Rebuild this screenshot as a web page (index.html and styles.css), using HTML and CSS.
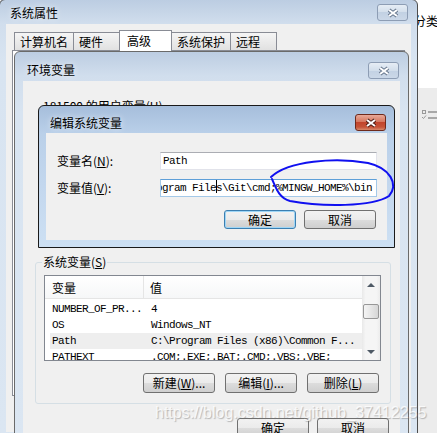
FILE: index.html
```html
<!DOCTYPE html>
<html>
<head>
    <meta charset="utf-8">
    <title>编辑系统变量</title>
    <link rel="stylesheet" href="styles.css">
</head>
<body>
    <div class="desktop">
        <div class="back-win">
            <div class="back-top">分类</div>
            <div class="back-bottom">
                <svg width="16" height="11" viewBox="0 0 16 11">
                    <rect x="0.5" y="0.5" width="3" height="3" fill="none" stroke="#9a9a9a"/>
                    <rect x="6" y="1" width="10" height="2" fill="#a8a8a8"/>
                    <path d="M0 7 L1.5 8.5 L4 5.5" stroke="#9a9a9a" fill="none"/>
                    <rect x="6" y="7" width="10" height="2" fill="#a8a8a8"/>
                </svg>
            </div>
        </div>

        <div class="win win-sys">
            <div class="title-bar">
                <span class="title">系统属性</span>
                <span class="close">
                    <svg width="14" height="10" viewBox="0 0 14 10"><path d="M3 2 L11 8 M11 2 L3 8" stroke="#66768c" stroke-width="4"/><path d="M3 2 L11 8 M11 2 L3 8" stroke="#fff" stroke-width="2"/></svg>
                </span>
            </div>
            <div class="client sys-client">
                <div class="tabs">
                    <div class="tab">计算机名</div>
                    <div class="tab">硬件</div>
                    <div class="tab active">高级</div>
                    <div class="tab">系统保护</div>
                    <div class="tab">远程</div>
                </div>
                <div class="tab-panel"></div>
            </div>
        </div>

        <div class="win win-env">
            <div class="title-bar">
                <span class="title">环境变量</span>
                <span class="close">
                    <svg width="14" height="10" viewBox="0 0 14 10"><path d="M3 2 L11 8 M11 2 L3 8" stroke="#66768c" stroke-width="4"/><path d="M3 2 L11 8 M11 2 L3 8" stroke="#fff" stroke-width="2"/></svg>
                </span>
            </div>
            <div class="client env-client">
                <div class="group-caption">181500 的用户变量(<u>U</u>)</div>
                <div class="user-area"></div>
                <fieldset class="group">
                    <legend>系统变量(<u>S</u>)</legend>
                    <div class="listbox">
                        <div class="list-grid">
                            <div class="list-head">
                                <div class="col-name">变量</div>
                                <div class="col-value">值</div>
                            </div>
                            <div class="list-body mono">
                                <div class="list-row"><div class="col-name">NUMBER_OF_PR...</div><div class="col-value">4</div></div>
                                <div class="list-row"><div class="col-name">OS</div><div class="col-value">Windows_NT</div></div>
                                <div class="list-row hot"><div class="col-name">Path</div><div class="col-value">C:\Program Files (x86)\Common F...</div></div>
                                <div class="list-row"><div class="col-name">PATHEXT</div><div class="col-value">.COM;.EXE;.BAT;.CMD;.VBS;.VBE;</div></div>
                            </div>
                        </div>
                        <div class="vscroll">
                            <div class="sb-btn"><span class="arrow-up"></span></div>
                            <div class="sb-track"><div class="sb-thumb"></div></div>
                            <div class="sb-btn"><span class="arrow-down"></span></div>
                        </div>
                    </div>
                    <div class="btn-row group-btns">
                        <button class="btn">新建(<u>W</u>)...</button>
                        <button class="btn">编辑(<u>I</u>)...</button>
                        <button class="btn">删除(<u>L</u>)</button>
                    </div>
                </fieldset>
                <div class="btn-row dialog-btns">
                    <button class="btn">确定</button>
                    <button class="btn">取消</button>
                </div>
            </div>
        </div>

        <div class="win win-edit">
            <div class="title-bar">
                <span class="title">编辑系统变量</span>
                <span class="close close-red">
                    <svg width="14" height="10" viewBox="0 0 14 10"><path d="M3 2 L11 8 M11 2 L3 8" stroke="#4a1a10" stroke-width="4"/><path d="M3 2 L11 8 M11 2 L3 8" stroke="#fff" stroke-width="2"/></svg>
                </span>
            </div>
            <div class="client edit-client">
                <div class="field-row">
                    <label>变量名(<u>N</u>):</label>
                    <div class="edit-box mono">Path</div>
                </div>
                <div class="field-row">
                    <label>变量值(<u>V</u>):</label>
                    <div class="edit-box focus mono"><span class="scrolled">ogram File<span class="caret"></span>s\Git\cmd;%MINGW_HOME%\bin</span></div>
                </div>
                <div class="btn-row edit-btns">
                    <button class="btn default">确定</button>
                    <button class="btn">取消</button>
                </div>
            </div>
        </div>

        <svg class="ink-mark" width="437" height="433" viewBox="0 0 437 433">
            <path d="M271 177 C 288 161, 335 157, 368 163 C 390 168, 399 184, 389 196 C 372 207, 322 207, 290 201 C 279 198, 276 188, 272 179" fill="none" stroke="#1010f0" stroke-width="2" stroke-linecap="round"/>
        </svg>

        <div class="watermark">https://blog.csdn.net/github_37412255</div>
    </div>
</body>
</html>
```

FILE: styles.css
```css
body {
    margin: 0;
    font-family: "Noto Sans CJK SC", sans-serif;
    font-size: 12px;
    color: #000;
    background-color: #f0f0f0;
}

.desktop {
    position: relative;
    width: 437px;
    height: 433px;
    overflow: hidden;
}

.mono {
    font-family: "Liberation Mono", monospace;
    font-size: 11px;
    letter-spacing: -0.6px;
}

/* window behind, on the right */
.back-win {
    position: absolute;
    left: 408px;
    top: 0;
    width: 29px;
    height: 433px;
    display: flex;
    flex-direction: column;
    overflow: hidden;
}

.back-top {
    height: 88px;
    background-color: #fff;
    padding: 13px 0 0 6px;
    line-height: 16px;
    white-space: nowrap;
    box-sizing: border-box;
}

.back-bottom {
    flex: 1;
    background-color: #ececec;
    padding: 19px 0 0 14px;
}

/* windows */
.win {
    position: absolute;
    box-sizing: border-box;
    border: 1px solid #666;
    border-radius: 6px 6px 0 0;
    display: flex;
    flex-direction: column;
    background: linear-gradient(#bccde2, #d1deed 24px, #d8e4f1 60px, #dbe6f2);
}

.title-bar {
    flex: none;
    display: flex;
    justify-content: space-between;
    align-items: flex-start;
}

.title {
    line-height: 16px;
    text-shadow: 0 0 6px rgba(255, 255, 255, 0.9);
}

.close {
    width: 31px;
    height: 17px;
    box-sizing: border-box;
    border: 1px solid #8d9db4;
    border-radius: 3px;
    background: linear-gradient(#e6edf5, #d2deeb 50%, #c2d1e3 50%, #cbd8e8);
    display: flex;
    align-items: center;
    justify-content: center;
}

.close-red {
    border-color: #6e2a1c;
    background: linear-gradient(#e8a998, #d6775f 45%, #c2452c 50%, #c65337 80%, #d88a6b);
}

.client {
    flex: 1;
    background-color: #f0f0f0;
}

/* 系统属性 */
.win-sys {
    left: -1px;
    top: -1px;
    width: 419px;
    height: 440px;
    padding: 0 6px 6px;
    border-color: #4d4d4d;
}

.win-sys .title-bar {
    height: 24px;
}

.win-sys .title {
    padding: 5px 0 0 4px;
}

.win-sys .close {
    margin: 4px 3px 0 0;
}

.tabs {
    display: flex;
    align-items: flex-end;
    padding: 6px 0 0 8px;
}

.tab {
    height: 18px;
    min-width: 47px;
    box-sizing: border-box;
    padding: 0 5px;
    border: 1px solid #898c95;
    border-bottom: none;
    background: linear-gradient(#f5f5f5, #e1e1e1);
    line-height: 18px;
}

.tab + .tab {
    margin-left: -1px;
}

.tab.active {
    position: relative;
    z-index: 1;
    height: 21px;
    min-width: 53px;
    padding: 0 7px;
    margin-bottom: -1px;
    background: #fff;
    line-height: 19px;
}

.tab-panel {
    height: 344px;
    margin: 0 6px;
    border: 1px solid #898c95;
    background-color: #fff;
}

/* 环境变量 */
.win-env {
    left: 14px;
    top: 51px;
    width: 395px;
    height: 400px;
    padding: 0 8px 8px;
    border-color: #6a6a6a;
}

.win-env .title-bar {
    height: 29px;
}

.win-env .title {
    padding: 10px 0 0 4px;
}

.win-env .close {
    margin: 10px 1px 0 0;
}

.env-client {
    padding-top: 17px;
}

.group-caption {
    padding-left: 20px;
    line-height: 16px;
}

.user-area {
    height: 140px;
}

.group {
    margin: 0 9px 0 12px;
    padding: 5px 9px 10px 8px;
    border: 1px solid #d5dfe5;
    border-radius: 3px;
}

.group legend {
    padding: 0 1px;
    margin-left: -2px;
    line-height: 16px;
}

.listbox {
    height: 86px;
    box-sizing: border-box;
    border: 1px solid #828790;
    background-color: #fff;
    display: flex;
    overflow: hidden;
}

.list-grid {
    flex: 1;
    overflow: hidden;
}

.list-head {
    display: flex;
    height: 23px;
    box-sizing: border-box;
    border-bottom: 1px solid #e5e5e5;
    background: linear-gradient(#fff, #f6f7f8);
}

.list-head .col-name {
    width: 99px;
    box-sizing: border-box;
    padding: 3px 0 0 7px;
    border-right: 1px solid #e5e5e5;
    line-height: 18px;
}

.list-head .col-value {
    padding: 3px 0 0 6px;
    line-height: 18px;
}

.list-body {
    padding-top: 2px;
}

.list-row {
    display: flex;
    height: 16px;
    margin-left: 5px;
    line-height: 16px;
    white-space: nowrap;
}

.list-row.hot {
    background-color: #eeeeee;
}

.list-row .col-name {
    width: 94px;
    box-sizing: border-box;
    padding-left: 2px;
}

.list-row .col-value {
    padding-left: 7px;
}

.vscroll {
    width: 18px;
    display: flex;
    flex-direction: column;
    background: linear-gradient(90deg, #e9e9e9, #f5f5f5 20%, #f5f5f5 80%, #ececec);
}

.sb-btn {
    height: 17px;
    display: flex;
    align-items: center;
    justify-content: center;
}

.arrow-up {
    border-left: 4px solid transparent;
    border-right: 4px solid transparent;
    border-bottom: 4px solid #4f5a66;
}

.arrow-down {
    border-left: 4px solid transparent;
    border-right: 4px solid transparent;
    border-top: 4px solid #4f5a66;
}

.sb-track {
    flex: 1;
    padding: 11px 1px 0;
}

.sb-thumb {
    height: 15px;
    border: 1px solid #979797;
    border-radius: 2px;
    box-sizing: border-box;
    background: linear-gradient(90deg, #f4f4f4, #e6e6e6 50%, #d6d6d6);
}

/* buttons */
.btn-row {
    display: flex;
    justify-content: flex-end;
}

.btn {
    width: 72px;
    height: 20px;
    padding: 0;
    box-sizing: border-box;
    border: 1px solid #707070;
    border-radius: 3px;
    background: linear-gradient(#f2f2f2, #ebebeb 50%, #dddddd 50%, #cfcfcf);
    font-family: "Noto Sans CJK SC", sans-serif;
    font-size: 12px;
    color: #000;
    line-height: 16px;
}

.btn.default {
    border-color: #3c7fb1;
    box-shadow: inset 0 0 0 1px #9fd6f6;
}

.group-btns {
    margin-top: 12px;
    gap: 10px;
    padding-right: 2px;
}

.dialog-btns {
    margin-top: 14px;
    gap: 8px;
    padding-right: 11px;
}

/* 编辑系统变量 */
.win-edit {
    left: 38px;
    top: 105px;
    width: 357px;
    height: 143px;
    padding: 0 7px 7px;
    border-color: #1a1a1a;
    background: linear-gradient(#a6bedb, #bad0e9 28px, #c3d7ee 80px, #cde0f3);
}

.win-edit .title-bar {
    height: 27px;
}

.win-edit .title {
    padding: 9px 0 0 4px;
}

.win-edit .close {
    margin: 8px 1px 0 0;
}

.edit-client {
    padding: 19px 10px 0 11px;
}

.field-row {
    display: flex;
    align-items: center;
    height: 18px;
}

.field-row + .field-row {
    margin-top: 9px;
}

.field-row label {
    width: 103px;
    line-height: 16px;
}

.edit-box {
    flex: 1;
    height: 18px;
    box-sizing: border-box;
    border: 1px solid #e2e3ea;
    border-top-color: #abadb3;
    background-color: #fff;
    padding-left: 2px;
    line-height: 16px;
    white-space: nowrap;
    overflow: hidden;
}

.edit-box.focus {
    border-color: #a4c9e8;
    border-top-color: #5e9fd8;
    padding-left: 0;
}

.scrolled {
    margin-left: -5px;
}

.caret {
    display: inline-block;
    width: 1px;
    height: 13px;
    margin-right: -1px;
    background-color: #000;
    vertical-align: -2px;
}

.edit-btns {
    margin-top: 13px;
    gap: 8px;
    padding-right: 1px;
}

.edit-btns .btn {
    height: 19px;
}

/* overlays */
.ink-mark {
    position: absolute;
    left: 0;
    top: 0;
    pointer-events: none;
}

.watermark {
    position: absolute;
    left: 155px;
    top: 404px;
    font-family: "Liberation Sans", Arial, sans-serif;
    font-size: 16px;
    line-height: 18px;
    color: rgba(255, 255, 255, 0.8);
    text-shadow: 1px 1px 1px rgba(110, 110, 110, 0.45);
    white-space: nowrap;
}
```
